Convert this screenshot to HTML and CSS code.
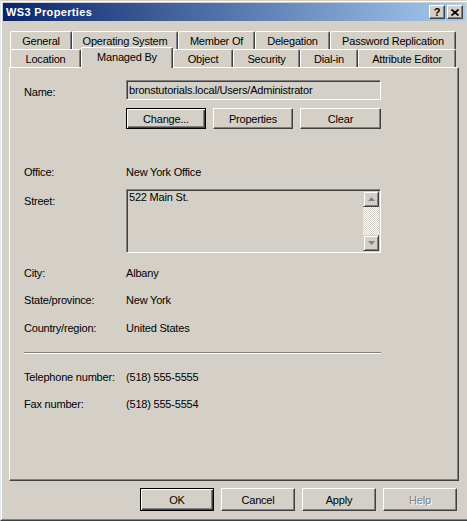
FILE: index.html
```html
<!DOCTYPE html>
<html>
<head>
<meta charset="utf-8">
<title>WS3 Properties</title>
<link rel="stylesheet" href="styles.css">
</head>
<body>
<div class="window">
  <div class="frame">
    <div class="titlebar">
      <span class="title">WS3 Properties</span>
      <div class="caption-btns">
        <span class="cbtn cbtn-help">?</span>
        <span class="cbtn cbtn-close"><svg width="8" height="7" viewBox="0 0 8 7"><path d="M0.5 0.5 L7.5 6.5 M7.5 0.5 L0.5 6.5" stroke="#000" stroke-width="1.7" fill="none"/></svg></span>
      </div>
    </div>

    <div class="tabs">
      <div class="tabrow">
        <div class="tab w-general">General</div>
        <div class="tab w-os">Operating System</div>
        <div class="tab w-member">Member Of</div>
        <div class="tab w-deleg">Delegation</div>
        <div class="tab w-pwd">Password Replication</div>
      </div>
      <div class="tabrow">
        <div class="tab w-loc">Location</div>
        <div class="tab tab-active w-managed">Managed By</div>
        <div class="tab w-object">Object</div>
        <div class="tab w-security">Security</div>
        <div class="tab w-dialin">Dial-in</div>
        <div class="tab w-attr">Attribute Editor</div>
      </div>
    </div>

    <div class="panel">
      <div class="row row-name">
        <div class="label label-name">Name:</div>
        <div class="edit">bronstutorials.local/Users/Administrator</div>
      </div>
      <div class="row row-buttons">
        <div class="btn btn-default w-change">Change...</div>
        <div class="btn w-props">Properties</div>
        <div class="btn w-clear">Clear</div>
      </div>
      <div class="row row-office">
        <div class="label">Office:</div>
        <div class="value">New York Office</div>
      </div>
      <div class="row row-street">
        <div class="label label-street">Street:</div>
        <div class="textarea">
          <div class="ta-text">522 Main St.</div>
          <div class="scrollbar">
            <div class="sb-btn"><svg width="7" height="4" viewBox="0 0 7 4"><polygon points="3.5,0 7,4 0,4" fill="#808080"/></svg></div>
            <div class="sb-track"></div>
            <div class="sb-btn"><svg width="7" height="4" viewBox="0 0 7 4"><polygon points="0,0 7,0 3.5,4" fill="#808080"/></svg></div>
          </div>
        </div>
      </div>
      <div class="row row-city">
        <div class="label">City:</div>
        <div class="value">Albany</div>
      </div>
      <div class="row row-state">
        <div class="label">State/province:</div>
        <div class="value">New York</div>
      </div>
      <div class="row row-country">
        <div class="label">Country/region:</div>
        <div class="value">United States</div>
      </div>
      <div class="separator"></div>
      <div class="row row-phone">
        <div class="label">Telephone number:</div>
        <div class="value">(518) 555-5555</div>
      </div>
      <div class="row row-fax">
        <div class="label">Fax number:</div>
        <div class="value">(518) 555-5554</div>
      </div>
    </div>

    <div class="footer">
      <div class="btn btn-default fbtn">OK</div>
      <div class="btn fbtn">Cancel</div>
      <div class="btn fbtn">Apply</div>
      <div class="btn fbtn btn-disabled">Help</div>
    </div>
  </div>
</div>
</body>
</html>
```

FILE: styles.css
```css
* { box-sizing: border-box; }

body {
  margin: 0;
  background: #d4d0c8;
  font-family: "Liberation Sans", Arial, sans-serif;
  font-size: 11px;
  letter-spacing: -0.2px;
  color: #000;
}

.window {
  width: 467px;
  height: 521px;
  background: #d4d0c8;
  border-top: 1px solid #d4d0c8;
  border-left: 1px solid #dde5ee;
  border-bottom: 1px solid #404040;
}

.frame {
  height: 100%;
  border-top: 1px solid #fff;
  border-left: 1px solid #fff;
  border-bottom: 1px solid #808080;
  padding: 1px 2px 1px 1px;
  display: flex;
  flex-direction: column;
}

/* title bar */
.titlebar {
  height: 18px;
  flex: none;
  background: linear-gradient(to right, #0a246a, #a6caf0);
  display: flex;
  align-items: center;
  justify-content: space-between;
  padding: 0 2px 0 3px;
}
.title {
  color: #fff;
  font-weight: bold;
  font-size: 11px;
  letter-spacing: 0.35px;
}
.caption-btns {
  display: flex;
  gap: 2px;
}
.cbtn {
  width: 16px;
  height: 14px;
  background: #d4d0c8;
  border: 1px solid;
  border-color: #fff #404040 #404040 #fff;
  box-shadow: inset -1px -1px #808080;
  display: flex;
  align-items: center;
  justify-content: center;
}
.cbtn-help {
  font-weight: bold;
  font-size: 11px;
  line-height: 12px;
  letter-spacing: 0;
}

/* tabs */
.tabs {
  margin: 10px 0 0 7px;
  width: 446px;
  flex: none;
}
.tabrow {
  display: flex;
  height: 18px;
}
.tab {
  height: 18px;
  flex: none;
  background: #d4d0c8;
  border-top: 1px solid #fff;
  border-left: 1px solid #fff;
  border-right: 1px solid #404040;
  box-shadow: inset -1px 0 #808080;
  border-radius: 2px 2px 0 0;
  text-align: center;
  line-height: 14px;
  padding-top: 2px;
  white-space: nowrap;
}
.tab-active {
  position: relative;
  z-index: 2;
  margin-top: -2px;
  height: 21px;
  padding-top: 2px;
}
.w-general { width: 62px; }
.w-os { width: 106px; }
.w-member { width: 77px; }
.w-deleg { width: 75px; }
.w-pwd { width: 126px; }
.w-loc { width: 71px; }
.w-managed { width: 92px; }
.w-object { width: 60px; }
.w-security { width: 67px; }
.w-dialin { width: 58px; }
.w-attr { width: 98px; }

/* panel */
.panel {
  margin-left: 6px;
  width: 450px;
  height: 414px;
  flex: none;
  border: 1px solid;
  border-color: #fff #404040 #404040 #fff;
  box-shadow: inset -1px -1px #808080;
  padding: 12px 0 0 14px;
}
.row {
  display: flex;
  align-items: flex-start;
  line-height: 14px;
}
.label {
  width: 102px;
  flex: none;
  white-space: nowrap;
}
.label-name { padding-top: 5px; }
.label-street { padding-top: 5px; }

.edit {
  width: 255px;
  height: 20px;
  border: 1px solid;
  border-color: #808080 #fff #fff #808080;
  box-shadow: inset 1px 1px #404040, inset -1px -1px #d4d0c8;
  padding: 2px 0 0 2px;
  white-space: nowrap;
}

.row-buttons {
  margin-top: 8px;
  margin-left: 102px;
  gap: 7px;
}
.btn {
  height: 21px;
  background: #d4d0c8;
  border: 1px solid;
  border-color: #fff #404040 #404040 #fff;
  box-shadow: inset -1px -1px #808080;
  display: flex;
  align-items: center;
  justify-content: center;
  white-space: nowrap;
}
.btn-default {
  border-color: #000;
  box-shadow: inset 1px 1px #fff, inset -1px -1px #404040, inset -2px -2px #808080;
}
.w-change { width: 80px; }
.w-props { width: 80px; }
.w-clear { width: 81px; }

.row-office { margin-top: 36px; }
.row-street { margin-top: 10px; }

.textarea {
  width: 255px;
  height: 64px;
  border: 1px solid;
  border-color: #808080 #fff #fff #808080;
  box-shadow: inset 1px 1px #404040, inset -1px -1px #d4d0c8;
  padding: 1px;
  display: flex;
}
.ta-text {
  flex: 1;
  line-height: 13px;
  padding-left: 1px;
}
.scrollbar {
  width: 16px;
  display: flex;
  flex-direction: column;
}
.sb-btn {
  width: 16px;
  height: 16px;
  flex: none;
  background: #d4d0c8;
  border: 1px solid;
  border-color: #d4d0c8 #404040 #404040 #d4d0c8;
  box-shadow: inset 1px 1px #fff, inset -1px -1px #808080;
  display: flex;
  align-items: center;
  justify-content: center;
}
.sb-track {
  flex: 1;
  background-image: repeating-conic-gradient(#fff 0 25%, #d4d0c8 0 50%);
  background-size: 2px 2px;
}

.row-city { margin-top: 13px; }
.row-state { margin-top: 13px; }
.row-country { margin-top: 14px; }

.separator {
  width: 357px;
  height: 2px;
  margin-top: 17px;
  border-top: 1px solid #808080;
  border-bottom: 1px solid #fff;
}
.row-phone { margin-top: 16px; }
.row-fax { margin-top: 13px; }

/* footer */
.footer {
  display: flex;
  gap: 7px;
  margin: 7px 0 0 137px;
}
.fbtn {
  width: 74px;
  height: 23px;
}
.btn-disabled {
  color: #808080;
  text-shadow: 1px 1px #fff;
}
```
